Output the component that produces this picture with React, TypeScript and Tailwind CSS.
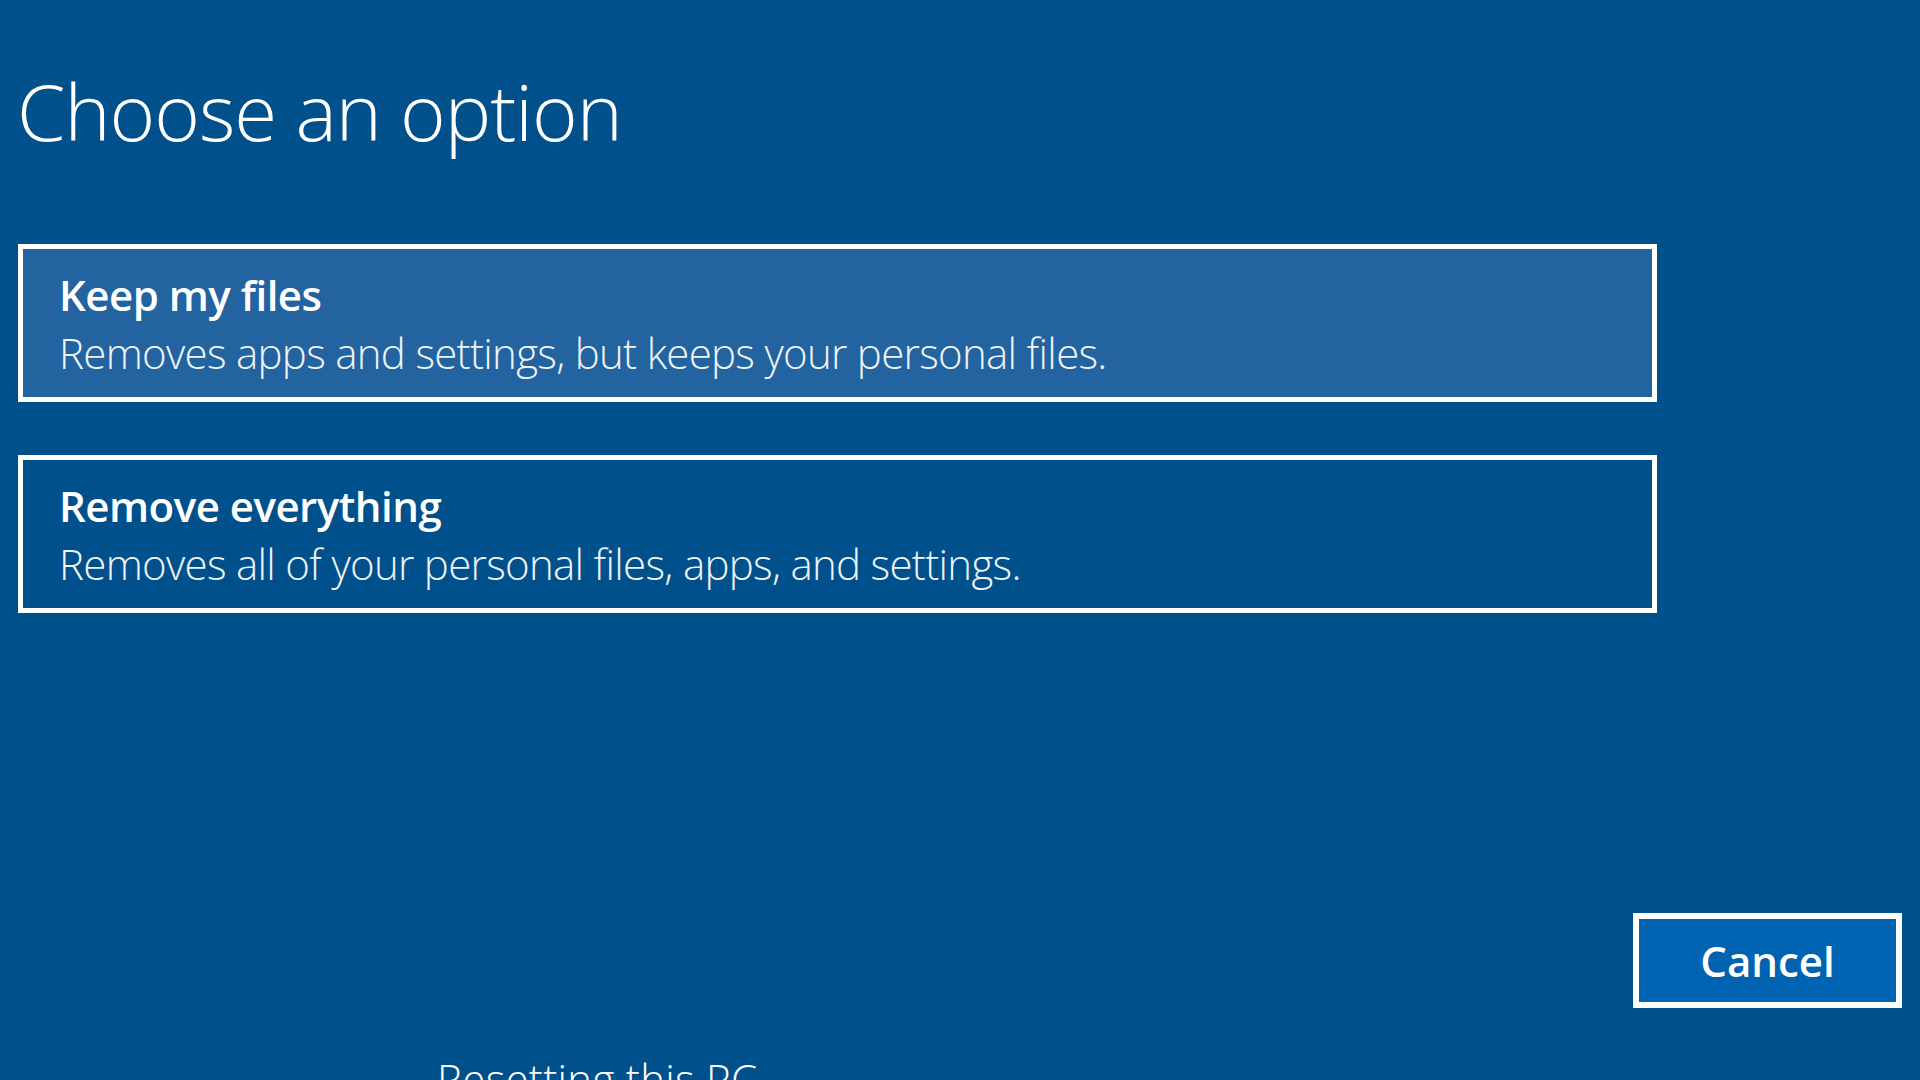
import React from "react";

type Option = {
  title: string;
  description: string;
  highlighted?: boolean;
};

const options: Option[] = [
  {
    title: "Keep my files",
    description: "Removes apps and settings, but keeps your personal files.",
    highlighted: true,
  },
  {
    title: "Remove everything",
    description: "Removes all of your personal files, apps, and settings.",
  },
];

function OptionCard({ option }: { option: Option }) {
  return (
    <button
      type="button"
      className={
        "block w-full h-[158px] border-[5px] border-white text-left pl-[36px] pt-[2px] " +
        (option.highlighted ? "bg-[#2364a0]" : "bg-[#00508c]")
      }
    >
      <div className="text-[42px] leading-[58px] font-semibold text-white tracking-[-0.5px]">
        {option.title}
      </div>
      <div className="text-[42px] leading-[58px] font-light text-[#eef3f8] tracking-[-0.7px]">
        {option.description}
      </div>
    </button>
  );
}

export default function App() {
  return (
    <div className="w-[1920px] h-[1080px] overflow-hidden bg-[#00508c] text-white font-['Open_Sans','Noto_Sans',sans-serif]">
      <h1 className="pl-[17px] pt-[72px] text-[78px] leading-none font-light tracking-[-1px]">
        Choose an option
      </h1>

      <div className="mt-[94px] ml-[18px] w-[1639px] flex flex-col gap-[53px]">
        {options.map((o) => (
          <OptionCard key={o.title} option={o} />
        ))}
      </div>

      <div className="mt-[300px] flex justify-end pr-[18px]">
        <button
          type="button"
          className="w-[269px] h-[95px] border-[6px] border-white bg-[#0063b1] text-[42px] font-semibold text-white flex items-center justify-center"
        >
          Cancel
        </button>
      </div>

      <div className="mt-[50px] pl-[437px] text-[42px] leading-none font-light tracking-[0.3px]">
        Resetting this PC
      </div>
    </div>
  );
}
